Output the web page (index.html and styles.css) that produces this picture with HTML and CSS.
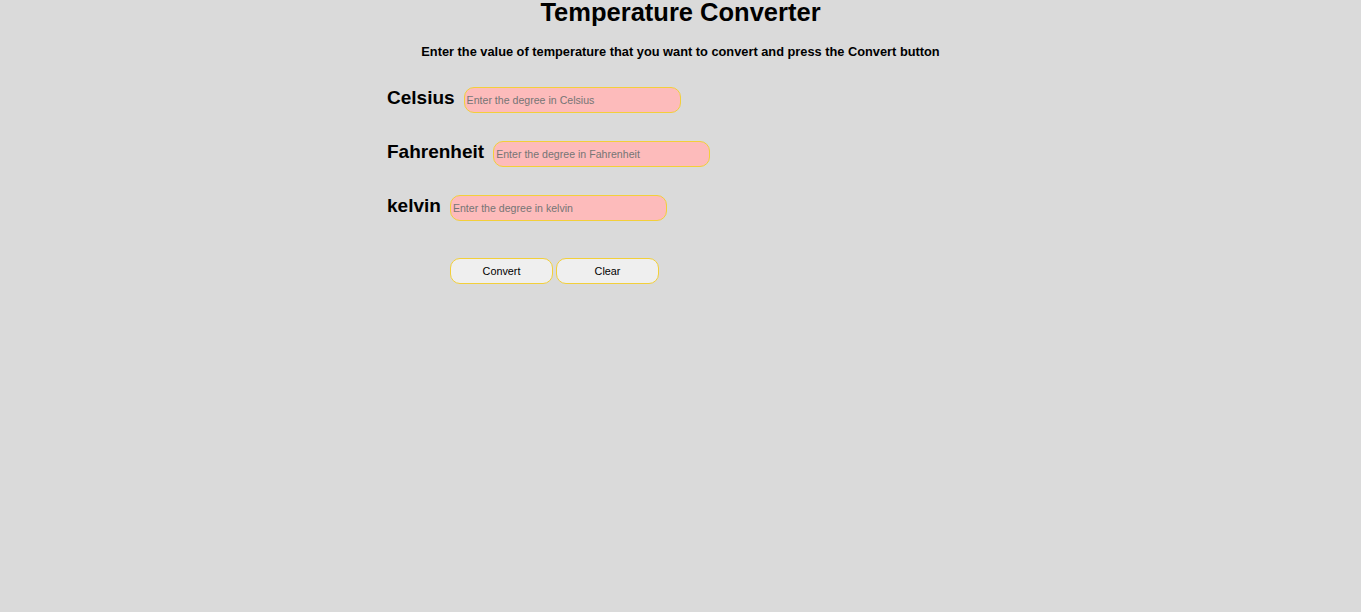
FILE: index.html
```html
<!DOCTYPE html>
<html>
<head>
<meta charset="utf-8">
<link rel="stylesheet" href="styles.css">
</head>
<body>
<h1 class="title">Temperature Converter</h1>
<p class="subtitle">Enter the value of temperature that you want to convert and press the Convert button</p>
<div class="form">
  <div class="row"><label class="label">Celsius</label><input class="field" type="text" placeholder="Enter the degree in Celsius"></div>
  <div class="row"><label class="label">Fahrenheit</label><input class="field" type="text" placeholder="Enter the degree in Fahrenheit"></div>
  <div class="row"><label class="label">kelvin</label><input class="field" type="text" placeholder="Enter the degree in kelvin"></div>
  <div class="buttons">
    <button class="btn">Convert</button>
    <button class="btn">Clear</button>
  </div>
</div>
</body>
</html>
```
FILE: styles.css
```css
html, body { margin: 0; padding: 0; }
body {
  background: #dadada;
  font-family: "Liberation Sans", Arial, sans-serif;
  color: #000;
  height: 612px;
}
.title {
  margin: 0;
  text-align: center;
  font-size: 25.5px;
  line-height: 24px;
  font-weight: bold;
}
.subtitle {
  margin: 20px 0 0;
  text-align: center;
  font-size: 12.8px;
  line-height: 16px;
  font-weight: bold;
}
.form {
  width: 587px;
  margin: 27px auto 0;
}
.row {
  display: flex;
  align-items: baseline;
  gap: 9px;
  height: 54px;
}
.label {
  font-size: 19px;
  font-weight: bold;
}
.field {
  width: 217px;
  height: 26px;
  box-sizing: border-box;
  border: 1px solid #f2cf3a;
  border-radius: 10px;
  background: #fdbbbb;
  padding: 0 2px;
  font-family: "Liberation Sans", Arial, sans-serif;
  font-size: 10.6px;
  outline: none;
}
.field::placeholder { color: #757575; }
.buttons {
  display: flex;
  gap: 3px;
  padding: 9px 0 0 63px;
}
.btn {
  width: 103px;
  height: 26px;
  box-sizing: border-box;
  border: 1px solid #f2cf3a;
  border-radius: 10px;
  background: #efefef;
  font-family: "Liberation Sans", Arial, sans-serif;
  font-size: 10.8px;
  color: #000;
}
```
